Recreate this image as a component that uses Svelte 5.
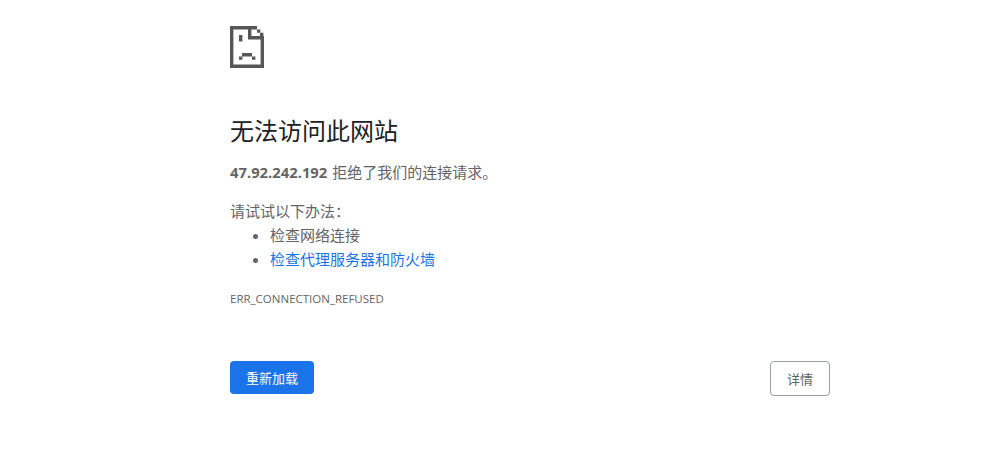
<script>
    const host = "47.92.242.192";
    const suggestions = [
        { text: "检查网络连接", link: false },
        { text: "检查代理服务器和防火墙", link: true },
    ];
</script>

<main class="page">
    <svg class="icon" viewBox="0 0 34 42" width="34" height="42" aria-hidden="true">
        <path
            fill="#575757"
            d="M0 0h27v3.4H0zM0 0h3.4v42H0zM30.6 10h3.4v32h-3.4zM0 38.400h34V42H0zM18 0h3.400v13.400H18zM18 10h13v3.400H18zM27 3.400h3.300v3.300H27zM30 6.700h3.400V10H30zM9 9h3.400v6.600H9zM12 27h10v3.400H12zM9 30.400h3.400v3.300H9zM22 30.400h3.400v3.300H22z"
        />
    </svg>

    <h1>无法访问此网站</h1>
    <p class="summary"><strong>{host}</strong><span class="rest">拒绝了我们的连接请求。</span></p>

    <p class="try">请试试以下办法：</p>
    <ul>
        {#each suggestions as item}
            <li>
                {#if item.link}
                    <a href="#proxy">{item.text}</a>
                {:else}
                    {item.text}
                {/if}
            </li>
        {/each}
    </ul>

    <div class="code">ERR_CONNECTION_REFUSED</div>

    <div class="actions">
        <button class="reload">重新加载</button>
        <button class="details">详情</button>
    </div>
</main>

<style>
    :global(body) {
        background: #fff;
        font-family: "Open Sans", "Noto Sans CJK SC", sans-serif;
        font-size: 15px;
        color: #646464;
    }

    .page {
        box-sizing: border-box;
        width: 600px;
        margin-left: 230px;
        padding-top: 26px;
    }

    .icon {
        display: block;
    }

    h1 {
        margin: 45px 0 0;
        color: #202124;
        font-size: 24px;
        font-weight: 400;
        line-height: 36px;
    }

    p {
        margin: 0;
    }

    .summary {
        margin-top: 11px;
        line-height: 24px;
    }

    .summary strong {
        font-size: 14.800px;
    }

    .rest {
        margin-left: 5px;
    }

    .try {
        margin-top: 15px;
        line-height: 24px;
    }

    ul {
        margin: 0;
        padding: 0 0 0 40px;
        line-height: 24px;
    }

    a {
        color: #1a73e8;
        text-decoration: none;
    }

    .code {
        margin-top: 20px;
        font-size: 11.500px;
        line-height: 16px;
    }

    .actions {
        display: flex;
        justify-content: space-between;
        align-items: flex-start;
        margin-top: 54px;
    }

    button {
        box-sizing: border-box;
        font-family: inherit;
        font-size: 13px;
        border-radius: 4px;
        padding: 0 16px;
    }

    .reload {
        height: 33px;
        background: #1a73e8;
        border: 0;
        color: #fff;
    }

    .details {
        height: 35px;
        background: #fff;
        border: 1px solid #9aa0a6;
        color: #5f6368;
    }
</style>
